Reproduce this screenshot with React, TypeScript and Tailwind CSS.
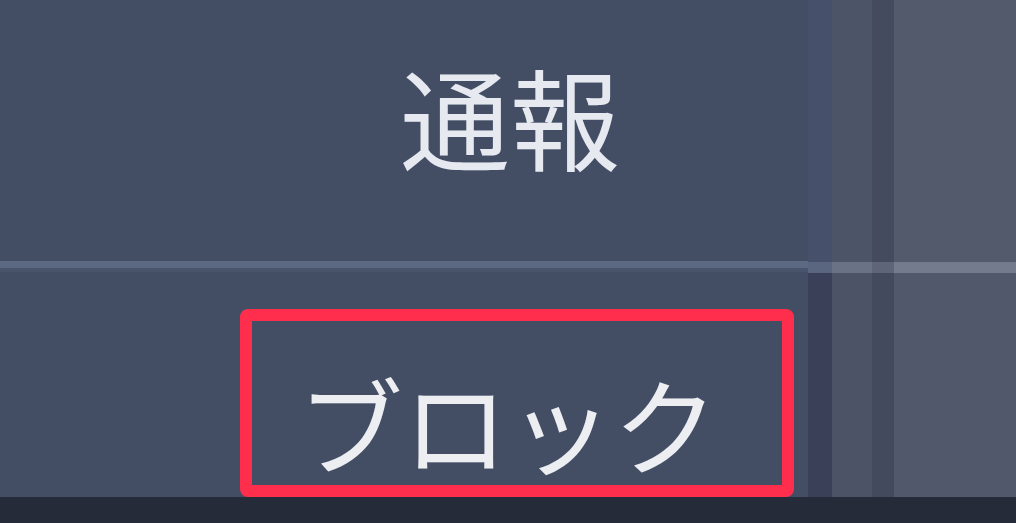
const jp = { fontFamily: '"Noto Sans CJK JP", "Noto Sans", sans-serif' }

export default function App() {
  return (
    <div className="w-[1016px] h-[523px] flex flex-col overflow-hidden bg-[#434e65]" style={jp}>
      <div className="flex flex-1 min-h-0">
        {/* menu panel */}
        <div className="w-[808px] flex flex-col">
          <div className="h-[262px] flex items-start pt-[60px] pl-[400px]">
            <span className="text-[110px] leading-none text-[#e6e9ef] font-normal">通報</span>
          </div>
          <div className="h-[7px] bg-[#5b6982]" />
          <div className="h-[4px] bg-[#48546b]" />
          <div className="flex-1 pt-[37px] pl-[240px]">
            <div className="w-[554px] h-[188px] border-[12px] border-[#ff2e4d] rounded-[8px] flex items-start pl-[46px] pt-[48px]">
              <span className="text-[105px] leading-none text-[#eceef2] font-normal">ブロック</span>
            </div>
          </div>
        </div>
        {/* blurred background columns */}
        <div className="w-[24px] flex flex-col">
          <div className="h-[262px] bg-[#46506a]" />
          <div className="h-[11px] bg-[#5a6580]" />
          <div className="flex-1 bg-[#3a4058]" />
        </div>
        <div className="w-[40px] flex flex-col">
          <div className="h-[262px] bg-[#4c5468]" />
          <div className="h-[11px] bg-[#6a7286]" />
          <div className="flex-1 bg-[#4d5367]" />
        </div>
        <div className="w-[22px] flex flex-col">
          <div className="h-[262px] bg-[#454b5e]" />
          <div className="h-[11px] bg-[#5e6578]" />
          <div className="flex-1 bg-[#444a5d]" />
        </div>
        <div className="flex-1 flex flex-col">
          <div className="h-[262px] bg-[#535a6c]" />
          <div className="h-[11px] bg-[#747b8c]" />
          <div className="flex-1 bg-[#51586b]" />
        </div>
      </div>
      <div className="h-[26px] bg-[#262b3a]" />
    </div>
  )
}
